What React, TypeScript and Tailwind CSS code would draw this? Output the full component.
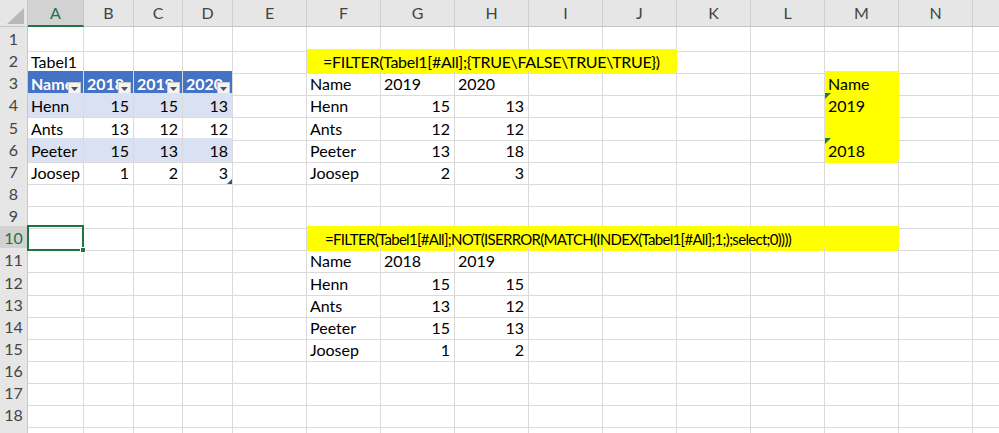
import React from 'react'

type Cell = {
  t?: string
  cls?: string // extra classes (span, bg, alignment)
  filter?: boolean
  tri?: boolean
  resize?: boolean
}

const COLS = ['A', 'B', 'C', 'D', 'E', 'F', 'G', 'H', 'I', 'J', 'K', 'L', 'M', 'N', 'O']

const GRID =
  'grid grid-cols-[28px_56px_50px_49px_50px_74px_74px_74px_74px_74px_74px_74px_74px_74px_74px_74px]'

const L = 'justify-start pl-[3px]'
const R = 'justify-end pr-[4px]'
const TH = 'bg-[#4472c4] border-[#4472c4] text-white font-bold justify-start pl-[3px]'
const BAND = 'bg-[#d9e1f2] border-[#d9e1f2]'
const YEL = 'bg-[#ffff00] border-[#ffff00]'

// sparse sheet contents, keyed by row number -> column letter
const sheet: Record<number, Record<string, Cell>> = {
  2: {
    A: { t: 'Tabel1', cls: L },
    F: {
      t: '=FILTER(Tabel1[#All];{TRUE\\FALSE\\TRUE\\TRUE})',
      cls: `col-span-5 ${YEL} justify-start pl-[16px] tracking-[-0.3px]`,
    },
  },
  3: {
    A: { t: 'Name', cls: TH, filter: true },
    B: { t: '2018', cls: TH, filter: true },
    C: { t: '2019', cls: TH, filter: true },
    D: { t: '2020', cls: TH, filter: true },
    F: { t: 'Name', cls: L },
    G: { t: '2019', cls: L },
    H: { t: '2020', cls: L },
    M: { t: 'Name', cls: `${YEL} ${L}` },
  },
  4: {
    A: { t: 'Henn', cls: `${BAND} ${L}` },
    B: { t: '15', cls: `${BAND} ${R}` },
    C: { t: '15', cls: `${BAND} ${R}` },
    D: { t: '13', cls: `${BAND} ${R}` },
    F: { t: 'Henn', cls: L },
    G: { t: '15', cls: R },
    H: { t: '13', cls: R },
    M: { t: '2019', cls: `${YEL} ${L}`, tri: true },
  },
  5: {
    A: { t: 'Ants', cls: L },
    B: { t: '13', cls: R },
    C: { t: '12', cls: R },
    D: { t: '12', cls: R },
    F: { t: 'Ants', cls: L },
    G: { t: '12', cls: R },
    H: { t: '12', cls: R },
    M: { cls: YEL },
  },
  6: {
    A: { t: 'Peeter', cls: `${BAND} ${L}` },
    B: { t: '15', cls: `${BAND} ${R}` },
    C: { t: '13', cls: `${BAND} ${R}` },
    D: { t: '18', cls: `${BAND} ${R}` },
    F: { t: 'Peeter', cls: L },
    G: { t: '13', cls: R },
    H: { t: '18', cls: R },
    M: { t: '2018', cls: `${YEL} ${L}`, tri: true },
  },
  7: {
    A: { t: 'Joosep', cls: L },
    B: { t: '1', cls: R },
    C: { t: '2', cls: R },
    D: { t: '3', cls: R, resize: true },
    F: { t: 'Joosep', cls: L },
    G: { t: '2', cls: R },
    H: { t: '3', cls: R },
  },
  10: {
    F: {
      t: '=FILTER(Tabel1[#All];NOT(ISERROR(MATCH(INDEX(Tabel1[#All];1;);select;0))))',
      cls: `col-span-8 ${YEL} justify-start pl-[18px] text-[15px] tracking-[-0.7px]`,
    },
  },
  11: {
    F: { t: 'Name', cls: L },
    G: { t: '2018', cls: L },
    H: { t: '2019', cls: L },
  },
  12: { F: { t: 'Henn', cls: L }, G: { t: '15', cls: R }, H: { t: '15', cls: R } },
  13: { F: { t: 'Ants', cls: L }, G: { t: '13', cls: R }, H: { t: '12', cls: R } },
  14: { F: { t: 'Peeter', cls: L }, G: { t: '15', cls: R }, H: { t: '13', cls: R } },
  15: { F: { t: 'Joosep', cls: L }, G: { t: '1', cls: R }, H: { t: '2', cls: R } },
}

const SPANS: Record<string, number> = { 'col-span-5': 5, 'col-span-8': 8 }

function FilterButton() {
  return (
    <span className="absolute right-[2px] bottom-[1px] w-[13px] h-[12px] bg-[#f3f3f3] border border-[#c8c8c8] flex items-end justify-center pb-[2px]">
      <svg width="7" height="4" viewBox="0 0 7 4">
        <path d="M0 0h7L3.5 4z" fill="#505050" />
      </svg>
    </span>
  )
}

function SheetRow({ n }: { n: number }) {
  const data = sheet[n] || {}
  const cells: React.ReactNode[] = []
  let i = 0
  while (i < COLS.length) {
    const col = COLS[i]
    const c = data[col]
    let span = 1
    if (c?.cls) {
      for (const k of Object.keys(SPANS)) if (c.cls.includes(k)) span = SPANS[k]
    }
    const selected = n === 10 && col === 'A'
    cells.push(
      <div
        key={col}
        className={`relative flex items-end pb-[2px] whitespace-nowrap border-r border-b border-[#dadada] leading-[18px] ${
          c?.t ? 'overflow-hidden' : ''
        } ${c?.cls ?? ''}`}
      >
        {c?.t}
        {c?.filter && <FilterButton />}
        {c?.tri && (
          <svg className="absolute left-0 top-0" width="6" height="6" viewBox="0 0 6 6">
            <path d="M0 0h6L0 6z" fill="#1e7b34" />
          </svg>
        )}
        {c?.resize && (
          <svg className="absolute right-0 bottom-0" width="5" height="5" viewBox="0 0 5 5">
            <path d="M5 0v5H0z" fill="#2f5597" />
          </svg>
        )}
        {selected && (
          <>
            <span className="absolute inset-[-1px] border-2 border-[#217346]" />
            <span className="absolute z-10 -right-[3px] -bottom-[3px] w-[6px] h-[6px] bg-[#217346] border border-white" />
          </>
        )}
      </div>
    )
    i += span
  }
  return (
    <div className={`${GRID} h-[22.15px]`}>
      <div
        className={`flex items-center justify-center border-r border-b text-[16px] ${
          n === 10
            ? 'bg-[#d2d2d2] text-[#217346] border-[#c6c6c6]'
            : 'bg-[#e6e6e6] text-[#444444] border-[#c6c6c6]'
        }`}
      >
        {n}
      </div>
      {cells}
    </div>
  )
}

export default function App() {
  const rows = Array.from({ length: 19 }, (_, k) => k + 1)
  return (
    <div
      className="w-[999px] h-[433px] overflow-hidden bg-white text-[16px] text-black"
      style={{ fontFamily: 'Lato, "Open Sans", sans-serif' }}
    >
      {/* column headers */}
      <div className={`${GRID} h-[27px]`}>
        <div className="relative bg-[#e6e6e6] border-r border-b border-[#c6c6c6]">
          <svg className="absolute right-[3px] bottom-[2px]" width="17" height="16" viewBox="0 0 17 16">
            <path d="M17 0v16H0z" fill="#b8b8b8" />
          </svg>
        </div>
        {COLS.map((c) => (
          <div
            key={c}
            className={`flex items-center justify-center text-[16px] border-r ${
              c === 'A'
                ? 'bg-[#d2d2d2] text-[#217346] border-r-[#c6c6c6] border-b-2 border-b-[#217346]'
                : 'bg-[#e6e6e6] text-[#444444] border-[#d0d0d0] border-b border-b-[#c6c6c6]'
            }`}
          >
            {c === 'O' ? '' : c}
          </div>
        ))}
      </div>

      {rows.map((n) => (
        <SheetRow key={n} n={n} />
      ))}
    </div>
  )
}
